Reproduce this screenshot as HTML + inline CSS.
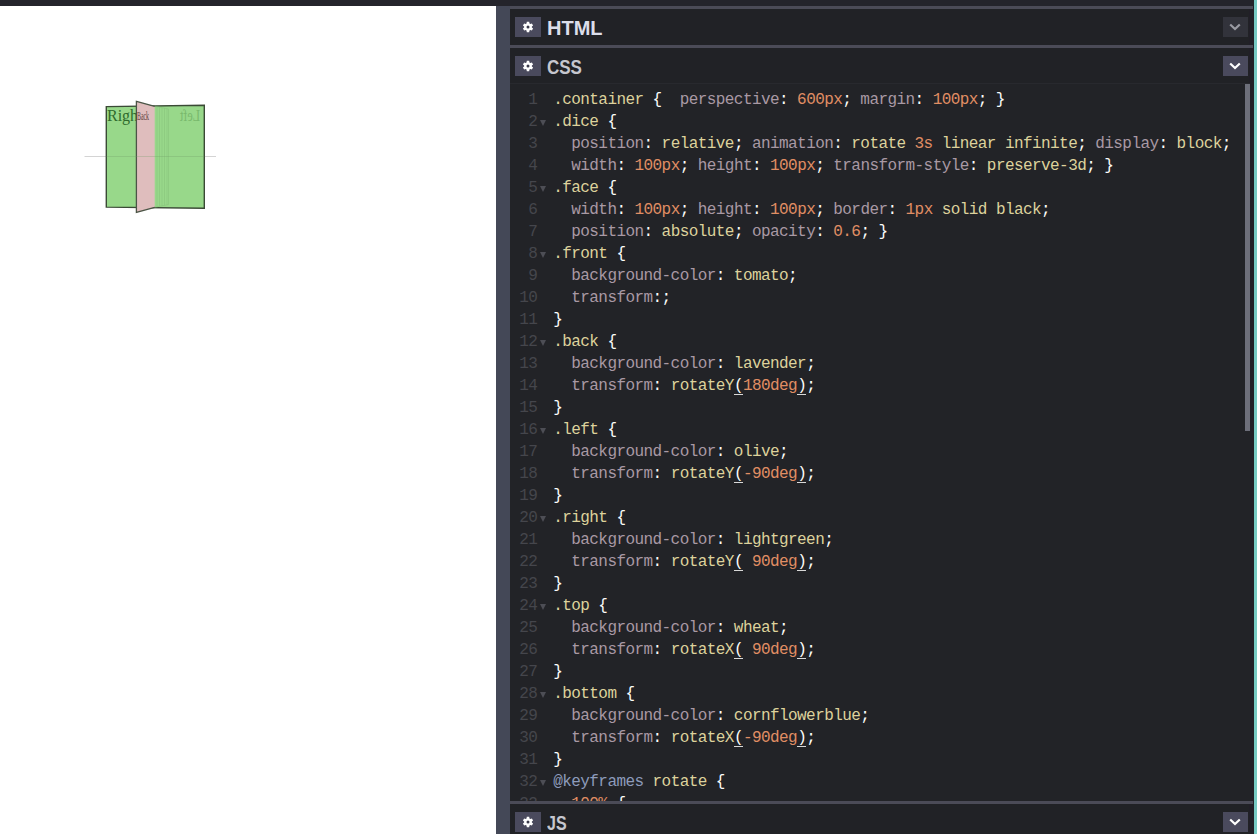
<!DOCTYPE html><html><head><meta charset="utf-8"><style>
*{margin:0;padding:0;box-sizing:border-box}
html,body{width:1257px;height:834px;overflow:hidden;background:#fff;font-family:"Liberation Sans",sans-serif}
.abs{position:absolute}
#topbar{left:0;top:0;width:1257px;height:6px;background:#24242b}
#preview{left:0;top:6px;width:496px;height:828px;background:#fff}
#gutter{left:496px;top:6px;width:14px;height:828px;background:#444857}
#panels{left:510px;top:6px;width:744px;height:828px;background:#212226}
#teal{left:1254px;top:0;width:3px;height:834px;background:#76c9c3}
#rstrip{left:1249px;top:6px;width:5px;height:828px;background:#211f27}
.bord{left:510px;width:743px;height:3px;background:#4b4b57}
.hdr{left:510px;width:740px;background:#1d1e22}
.gear{width:26px;height:20px;background:#4a4a5d}
.chev{width:25px;height:20px;background:#4a4a5d}
.chev.dim{background:#32333b}
.ttl{font-weight:bold;font-size:20px;color:#c6c7cf;line-height:20px}
#code{left:510px;top:84px;width:740px;height:717px;background:#222327;overflow:hidden}
.ln,.cl{position:absolute;font-family:"Liberation Mono",monospace;font-size:16px;letter-spacing:-0.57px;line-height:22px;white-space:pre;height:22px}
.ln{left:0;width:27.4px;text-align:right;color:#45464c}
.cl{left:43.2px}
.fold{position:absolute;left:30px;width:0;height:0;border-left:3.5px solid transparent;border-right:3.5px solid transparent;border-top:6px solid #4d4e55}
.s{color:#ddd29c}.b,.c,.w{color:#fcfcfa}.p{color:#a999a4}.n{color:#e08e64}.v{color:#ddd29c}.k{color:#8d9bbb}
.u{color:#fcfcfa;position:relative}.u::after{content:'';position:absolute;left:0;right:0;top:16.5px;height:1.2px;background:#d8d8d8}
#thumb{left:1245px;top:84px;width:5px;height:347px;background:#6d6f7a}
</style></head><body>
<div class="abs" id="topbar"></div>
<div class="abs" id="preview">
<svg width="496" height="828" style="position:absolute;left:0;top:0">
 <g transform="translate(0,-6)">
 <line x1="84.5" y1="156.5" x2="216" y2="156.5" stroke="#d4d4d4" stroke-width="1"/>
 <polygon points="106.3,106.6 204.3,105.3 204.3,208.3 106.3,207.1" fill="#98d88a" stroke="#3a4a35" stroke-width="1.4"/>
 <g stroke="#84c078" stroke-width="0.5" fill="none">
  <line x1="157" y1="106.8" x2="157" y2="206.8"/><line x1="159.5" y1="107.3" x2="159.5" y2="206.3"/><line x1="162" y1="107.8" x2="162" y2="205.8"/><line x1="164.5" y1="108.3" x2="164.5" y2="205.3"/><line x1="167" y1="108.8" x2="167" y2="204.8"/>
  <polyline points="155,106.3 168.5,109 168.5,204.6 155,207.2"/>
 </g>
 <text x="107" y="121" font-family="Liberation Serif" font-size="16" fill="#2f6a2c">Righ</text>
 <text x="0" y="0" font-family="Liberation Serif" font-size="16" fill="#5f9f55" opacity="0.55" transform="translate(200,121) scale(-0.75,1)">Left</text>
 <polygon points="136.4,101.4 154.7,106.4 154.7,207.3 136.4,212.5" fill="#dfbdbd"/>
 <polyline points="154.7,106.4 136.4,101.4 136.4,212.5 154.7,207.3" fill="none" stroke="#4b5546" stroke-width="1.3"/>
 <text x="137" y="120" font-family="Liberation Serif" font-size="13" fill="#5a3b3b" transform="translate(137,0) scale(0.45,1) translate(-137,0)">Back</text>
 <line x1="106.3" y1="156.5" x2="204.3" y2="156.5" stroke="#6f9a66" stroke-width="0.8" opacity="0.35"/>
 </g>
</svg>
</div>
<div class="abs" id="gutter"></div>
<div class="abs" id="panels"></div>
<div class="abs" id="rstrip"></div>
<div class="abs bord" style="top:6px"></div>
<div class="abs gear" style="left:515px;top:17px"><svg width="12" height="12" viewBox="0 0 12 12" style="position:absolute;left:7px;top:4px"><path fill="#fff" d="M4.54 2.38 L4.81 0.84 L7.19 0.84 L7.46 2.38 L8.40 2.93 L9.88 2.39 L11.07 4.45 L9.86 5.46 L9.86 6.54 L11.07 7.55 L9.88 9.61 L8.40 9.07 L7.46 9.62 L7.19 11.16 L4.81 11.16 L4.54 9.62 L3.60 9.07 L2.12 9.61 L0.93 7.55 L2.14 6.54 L2.14 5.46 L0.93 4.45 L2.12 2.39 L3.60 2.93Z"/><circle cx="6" cy="6" r="1.5" fill="#3a3a4a"/></svg></div>
<div class="abs ttl" style="left:547px;top:18px;color:#dcdeea">HTML</div>
<div class="abs chev dim" style="left:1223px;top:17px"><svg width="12" height="8" viewBox="0 0 12 8" style="position:absolute;left:6px;top:6px"><path d="M1.2 1.5L6 6l4.8-4.5" fill="none" stroke="#9a9ba3" stroke-width="2.2"/></svg></div>
<div class="abs bord" style="top:45px"></div>
<div class="abs gear" style="left:515px;top:56px"><svg width="12" height="12" viewBox="0 0 12 12" style="position:absolute;left:7px;top:4px"><path fill="#fff" d="M4.54 2.38 L4.81 0.84 L7.19 0.84 L7.46 2.38 L8.40 2.93 L9.88 2.39 L11.07 4.45 L9.86 5.46 L9.86 6.54 L11.07 7.55 L9.88 9.61 L8.40 9.07 L7.46 9.62 L7.19 11.16 L4.81 11.16 L4.54 9.62 L3.60 9.07 L2.12 9.61 L0.93 7.55 L2.14 6.54 L2.14 5.46 L0.93 4.45 L2.12 2.39 L3.60 2.93Z"/><circle cx="6" cy="6" r="1.5" fill="#3a3a4a"/></svg></div>
<div class="abs ttl" style="left:547px;top:57px;transform:scaleX(0.85);transform-origin:0 0">CSS</div>
<div class="abs chev" style="left:1223px;top:56px"><svg width="12" height="8" viewBox="0 0 12 8" style="position:absolute;left:6px;top:6px"><path d="M1.2 1.5L6 6l4.8-4.5" fill="none" stroke="#ffffff" stroke-width="2.2"/></svg></div>
<div class="abs" style="left:510px;top:83px;width:740px;height:1px;background:#28292e"></div>
<div class="abs" id="code">
<div class="ln" style="top:5px">1</div><div class="cl" style="top:5px"><span class="s">.container</span><span class="b">&#32;{&#32;&#32;</span><span class="p">perspective</span><span class="c">:&#32;</span><span class="n">600px</span><span class="c">;&#32;</span><span class="p">margin</span><span class="c">:&#32;</span><span class="n">100px</span><span class="c">;&#32;}</span></div><div class="ln" style="top:27px">2</div><div class="fold" style="top:36px"></div><div class="cl" style="top:27px"><span class="s">.dice</span><span class="b">&#32;{</span></div><div class="ln" style="top:49px">3</div><div class="cl" style="top:49px"><span class="c">&#32;&#32;</span><span class="p">position</span><span class="c">:&#32;</span><span class="v">relative</span><span class="c">;&#32;</span><span class="p">animation</span><span class="c">:&#32;</span><span class="v">rotate</span><span class="c">&#32;</span><span class="n">3s</span><span class="c">&#32;</span><span class="v">linear&#32;infinite</span><span class="c">;&#32;</span><span class="p">display</span><span class="c">:&#32;</span><span class="v">block</span><span class="c">;</span></div><div class="ln" style="top:71px">4</div><div class="cl" style="top:71px"><span class="c">&#32;&#32;</span><span class="p">width</span><span class="c">:&#32;</span><span class="n">100px</span><span class="c">;&#32;</span><span class="p">height</span><span class="c">:&#32;</span><span class="n">100px</span><span class="c">;&#32;</span><span class="p">transform-style</span><span class="c">:&#32;</span><span class="v">preserve-3d</span><span class="c">;&#32;}</span></div><div class="ln" style="top:93px">5</div><div class="fold" style="top:102px"></div><div class="cl" style="top:93px"><span class="s">.face</span><span class="b">&#32;{</span></div><div class="ln" style="top:115px">6</div><div class="cl" style="top:115px"><span class="c">&#32;&#32;</span><span class="p">width</span><span class="c">:&#32;</span><span class="n">100px</span><span class="c">;&#32;</span><span class="p">height</span><span class="c">:&#32;</span><span class="n">100px</span><span class="c">;&#32;</span><span class="p">border</span><span class="c">:&#32;</span><span class="n">1px</span><span class="c">&#32;</span><span class="v">solid&#32;black</span><span class="c">;</span></div><div class="ln" style="top:137px">7</div><div class="cl" style="top:137px"><span class="c">&#32;&#32;</span><span class="p">position</span><span class="c">:&#32;</span><span class="v">absolute</span><span class="c">;&#32;</span><span class="p">opacity</span><span class="c">:&#32;</span><span class="n">0.6</span><span class="c">;&#32;}</span></div><div class="ln" style="top:159px">8</div><div class="fold" style="top:168px"></div><div class="cl" style="top:159px"><span class="s">.front</span><span class="b">&#32;{</span></div><div class="ln" style="top:181px">9</div><div class="cl" style="top:181px"><span class="c">&#32;&#32;</span><span class="p">background-color</span><span class="c">:&#32;</span><span class="v">tomato</span><span class="c">;</span></div><div class="ln" style="top:203px">10</div><div class="cl" style="top:203px"><span class="c">&#32;&#32;</span><span class="p">transform</span><span class="c">:;</span></div><div class="ln" style="top:225px">11</div><div class="cl" style="top:225px"><span class="b">}</span></div><div class="ln" style="top:247px">12</div><div class="fold" style="top:256px"></div><div class="cl" style="top:247px"><span class="s">.back</span><span class="b">&#32;{</span></div><div class="ln" style="top:269px">13</div><div class="cl" style="top:269px"><span class="c">&#32;&#32;</span><span class="p">background-color</span><span class="c">:&#32;</span><span class="v">lavender</span><span class="c">;</span></div><div class="ln" style="top:291px">14</div><div class="cl" style="top:291px"><span class="c">&#32;&#32;</span><span class="p">transform</span><span class="c">:&#32;</span><span class="v">rotateY</span><span class="u">(</span><span class="n">180deg</span><span class="u">)</span><span class="c">;</span></div><div class="ln" style="top:313px">15</div><div class="cl" style="top:313px"><span class="b">}</span></div><div class="ln" style="top:335px">16</div><div class="fold" style="top:344px"></div><div class="cl" style="top:335px"><span class="s">.left</span><span class="b">&#32;{</span></div><div class="ln" style="top:357px">17</div><div class="cl" style="top:357px"><span class="c">&#32;&#32;</span><span class="p">background-color</span><span class="c">:&#32;</span><span class="v">olive</span><span class="c">;</span></div><div class="ln" style="top:379px">18</div><div class="cl" style="top:379px"><span class="c">&#32;&#32;</span><span class="p">transform</span><span class="c">:&#32;</span><span class="v">rotateY</span><span class="u">(</span><span class="n">-90deg</span><span class="u">)</span><span class="c">;</span></div><div class="ln" style="top:401px">19</div><div class="cl" style="top:401px"><span class="b">}</span></div><div class="ln" style="top:423px">20</div><div class="fold" style="top:432px"></div><div class="cl" style="top:423px"><span class="s">.right</span><span class="b">&#32;{</span></div><div class="ln" style="top:445px">21</div><div class="cl" style="top:445px"><span class="c">&#32;&#32;</span><span class="p">background-color</span><span class="c">:&#32;</span><span class="v">lightgreen</span><span class="c">;</span></div><div class="ln" style="top:467px">22</div><div class="cl" style="top:467px"><span class="c">&#32;&#32;</span><span class="p">transform</span><span class="c">:&#32;</span><span class="v">rotateY</span><span class="u">(</span><span class="n">&#32;90deg</span><span class="u">)</span><span class="c">;</span></div><div class="ln" style="top:489px">23</div><div class="cl" style="top:489px"><span class="b">}</span></div><div class="ln" style="top:511px">24</div><div class="fold" style="top:520px"></div><div class="cl" style="top:511px"><span class="s">.top</span><span class="b">&#32;{</span></div><div class="ln" style="top:533px">25</div><div class="cl" style="top:533px"><span class="c">&#32;&#32;</span><span class="p">background-color</span><span class="c">:&#32;</span><span class="v">wheat</span><span class="c">;</span></div><div class="ln" style="top:555px">26</div><div class="cl" style="top:555px"><span class="c">&#32;&#32;</span><span class="p">transform</span><span class="c">:&#32;</span><span class="v">rotateX</span><span class="u">(</span><span class="n">&#32;90deg</span><span class="u">)</span><span class="c">;</span></div><div class="ln" style="top:577px">27</div><div class="cl" style="top:577px"><span class="b">}</span></div><div class="ln" style="top:599px">28</div><div class="fold" style="top:608px"></div><div class="cl" style="top:599px"><span class="s">.bottom</span><span class="b">&#32;{</span></div><div class="ln" style="top:621px">29</div><div class="cl" style="top:621px"><span class="c">&#32;&#32;</span><span class="p">background-color</span><span class="c">:&#32;</span><span class="v">cornflowerblue</span><span class="c">;</span></div><div class="ln" style="top:643px">30</div><div class="cl" style="top:643px"><span class="c">&#32;&#32;</span><span class="p">transform</span><span class="c">:&#32;</span><span class="v">rotateX</span><span class="u">(</span><span class="n">-90deg</span><span class="u">)</span><span class="c">;</span></div><div class="ln" style="top:665px">31</div><div class="cl" style="top:665px"><span class="b">}</span></div><div class="ln" style="top:687px">32</div><div class="fold" style="top:696px"></div><div class="cl" style="top:687px"><span class="k">@keyframes</span><span class="c">&#32;</span><span class="v">rotate</span><span class="b">&#32;{</span></div><div class="ln" style="top:709px">33</div><div class="fold" style="top:718px"></div><div class="cl" style="top:709px"><span class="c">&#32;&#32;</span><span class="n">100%</span><span class="b">&#32;{</span></div>
</div>
<div class="abs" id="thumb"></div>
<div class="abs bord" style="top:801px"></div>
<div class="abs gear" style="left:515px;top:812px"><svg width="12" height="12" viewBox="0 0 12 12" style="position:absolute;left:7px;top:4px"><path fill="#fff" d="M4.54 2.38 L4.81 0.84 L7.19 0.84 L7.46 2.38 L8.40 2.93 L9.88 2.39 L11.07 4.45 L9.86 5.46 L9.86 6.54 L11.07 7.55 L9.88 9.61 L8.40 9.07 L7.46 9.62 L7.19 11.16 L4.81 11.16 L4.54 9.62 L3.60 9.07 L2.12 9.61 L0.93 7.55 L2.14 6.54 L2.14 5.46 L0.93 4.45 L2.12 2.39 L3.60 2.93Z"/><circle cx="6" cy="6" r="1.5" fill="#3a3a4a"/></svg></div>
<div class="abs ttl" style="left:547px;top:813px;transform:scaleX(0.8);transform-origin:0 0">JS</div>
<div class="abs chev" style="left:1223px;top:812px"><svg width="12" height="8" viewBox="0 0 12 8" style="position:absolute;left:6px;top:6px"><path d="M1.2 1.5L6 6l4.8-4.5" fill="none" stroke="#ffffff" stroke-width="2.2"/></svg></div>
<div class="abs" id="teal"></div>
</body></html>
